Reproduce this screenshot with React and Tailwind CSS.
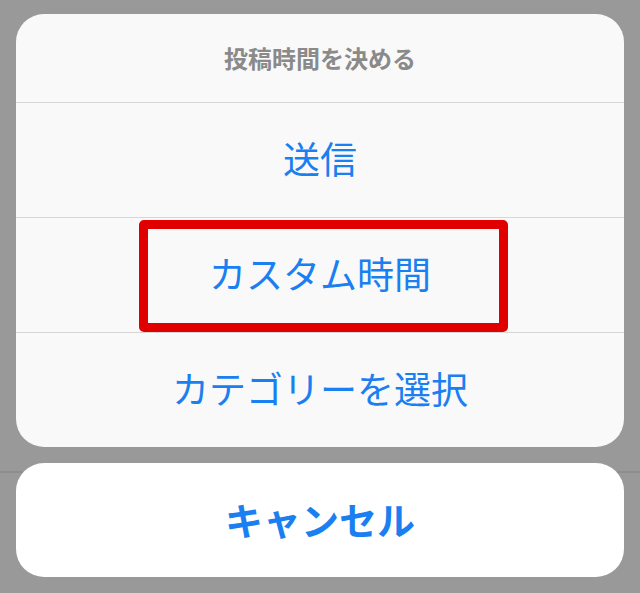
export default function App() {
  const font = { fontFamily: '"Noto Sans CJK JP", "Noto Sans", sans-serif' };

  return (
    <div
      className="relative w-[640px] h-[593px] bg-[#999999] px-4 pt-[14px] flex flex-col overflow-hidden"
      style={font}
    >
      {/* faint line behind the sheet */}
      <div className="absolute left-0 right-0 top-[471px] h-[2px] bg-[#8e8e8e]" />

      {/* Action sheet */}
      <div className="relative bg-[#f9f9f9] rounded-[28px] flex flex-col overflow-hidden">
        <div className="h-[88px] flex items-center justify-center text-[24px] font-semibold text-[#8a8a8a]">
          投稿時間を決める
        </div>
        <div className="h-[115px] border-t border-[#d6d6d6] flex items-center justify-center text-[37px] leading-none pb-[3px] text-[#1a7ff0]">
          送信
        </div>
        <div className="relative h-[115px] border-t border-[#d6d6d6] flex items-center justify-center text-[37px] leading-none pb-[3px] text-[#1a7ff0]">
          カスタム時間
          {/* highlight box */}
          <div className="absolute left-[123px] top-[2px] w-[369px] h-[112px] border-[9px] border-[#e00000] rounded-[5px]" />
        </div>
        <div className="h-[115px] border-t border-[#d6d6d6] flex items-center justify-center text-[37px] leading-none pb-[3px] text-[#1a7ff0]">
          カテゴリーを選択
        </div>
      </div>

      {/* Cancel */}
      <div className="relative mt-4 h-[114px] bg-white rounded-[28px] flex items-center justify-center text-[38px] leading-none pb-[3px] font-bold text-[#1a7ff0]">
        キャンセル
      </div>
    </div>
  );
}
